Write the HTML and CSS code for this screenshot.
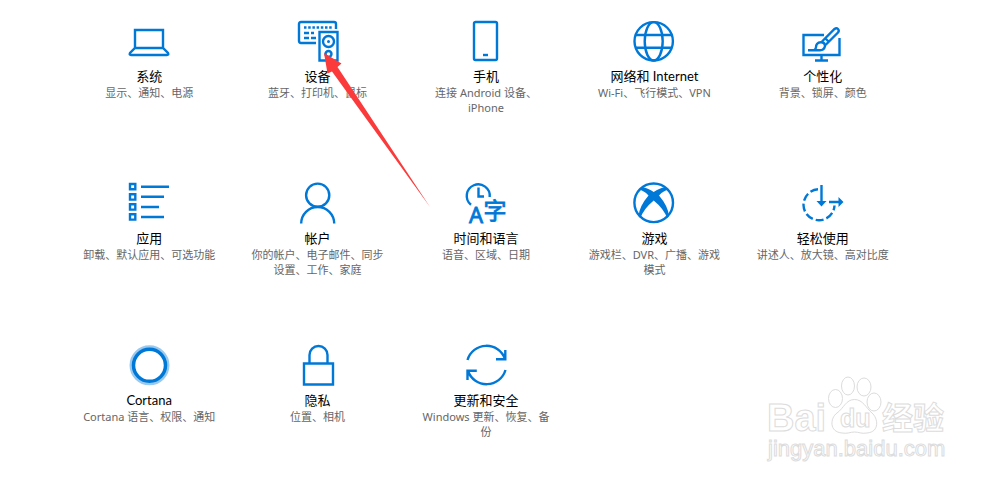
FILE: index.html
```
<!DOCTYPE html>
<html lang="zh-CN">
<head>
    <meta charset="UTF-8">
    <meta name="viewport" content="width=device-width, initial-scale=1.0">
    <title>Windows 设置</title>
    <link rel="stylesheet" href="styles.css">
</head>
<body>

    <main class="settings">
        <a class="tile" href="#system">
            <svg class="icon" viewBox="0 0 42 42" aria-hidden="true">
                <path d="M7 28V10h28v18M7 28h28l5 5q1 2-1 2H3q-2 0-1-2z"/>
            </svg>
            <span class="title">系统</span>
            <span class="desc">显示、通知、电源</span>
        </a>

        <a class="tile" href="#devices">
            <svg class="icon" viewBox="0 0 42 42" aria-hidden="true">
                <path d="M19 23H4q-2 0-2-2V4q0-2 2-2h33q2 0 2 2v5"/>
                <path d="M7 7.5h28" stroke-dasharray="2.5 1.7"/>
                <path d="M7 13h5M14 13h3M7 18h5M14 18h5"/>
                <path d="M22.5 12h18v28.5h-18z"/>
                <circle cx="31.5" cy="21.5" r="5.5"/>
                <circle cx="31.5" cy="21.5" r="1.5" class="solid"/>
                <circle cx="31.5" cy="34" r="3"/>
            </svg>
            <span class="title">设备</span>
            <span class="desc">蓝牙、打印机、鼠标</span>
            <!-- Red pointer -->
            <svg class="pointer" viewBox="0 0 106 154" aria-hidden="true">
                <path d="M0 0L17.5 10.5 13.5 14 106 154 8 18.5 3.5 20.5z"/>
            </svg>
        </a>

        <a class="tile" href="#phone">
            <svg class="icon" viewBox="0 0 42 42" aria-hidden="true">
                <rect x="9" y="2" width="23" height="38" rx="1.5"/>
                <path d="M18 35h5"/>
            </svg>
            <span class="title">手机</span>
            <span class="desc">连接 Android 设备、iPhone</span>
        </a>

        <a class="tile" href="#network">
            <svg class="icon" viewBox="0 0 42 42" aria-hidden="true">
                <circle cx="20.7" cy="21.3" r="19.2"/>
                <ellipse cx="20.7" cy="21.3" rx="9" ry="19.2"/>
                <path d="M3 15h35.5M3 27.7h35.5"/>
            </svg>
            <span class="title">网络和 Internet</span>
            <span class="desc">Wi-Fi、飞行模式、VPN</span>
        </a>

        <a class="tile" href="#personal">
            <svg class="icon" viewBox="0 0 42 42" aria-hidden="true">
                <path d="M22 15H1.500v20h36V18M19.500 35v5M13 40.500h13"/>
                <path d="M6 30.300h12q4 0 5-4c0-3-2-4-4-4-4 0-5 3-5 5q0 2-2 3"/>
                <path d="M20 21.500l12.500-12.500q2-1.500 3.500 0 1.500 1.500 0 3.500L23.500 25M23.500 18.500l3.500 3.500"/>
            </svg>
            <span class="title">个性化</span>
            <span class="desc">背景、锁屏、颜色</span>
        </a>

        <a class="tile" href="#apps">
            <svg class="icon" viewBox="0 0 42 42" aria-hidden="true">
                <path d="M2 2h5.300v5.300h-5.300zM2 12.300h5.300v5.300h-5.300zM2 22.300h5.300v5.300h-5.300zM2 32.300h5.300v5.300h-5.300z"/>
                <path d="M13 4.700h28M13 14.800h23M13 25h18M13 35h23"/>
            </svg>
            <span class="title">应用</span>
            <span class="desc">卸载、默认应用、可选功能</span>
        </a>

        <a class="tile" href="#accounts">
            <svg class="icon" viewBox="0 0 42 42" aria-hidden="true">
                <circle cx="20.700" cy="13.200" r="11.600"/>
                <path d="M4.200 41.500a16.500 16.500 0 0 1 33 0"/>
            </svg>
            <span class="title">帐户</span>
            <span class="desc">你的帐户、电子邮件、同步设置、工作、家庭</span>
        </a>

        <a class="tile" href="#time">
            <svg class="icon" viewBox="0 0 42 42" aria-hidden="true">
                <path d="M6 22.800A11.500 11.500 0 1 1 24.700 15M13.500 5.500V14.500H19"/>
                <text class="letter" x="11" y="41">A</text>
                <text class="hanzi" x="30" y="37">字</text>
            </svg>
            <span class="title">时间和语言</span>
            <span class="desc">语音、区域、日期</span>
        </a>

        <a class="tile" href="#gaming">
            <svg class="icon" viewBox="0 0 42 42" aria-hidden="true">
                <circle cx="20.700" cy="20.800" r="19.300"/>
                <path class="solid" d="M6 8Q8 5 10.500 5.500 15 6 20.700 10 26.500 6 31 5.500 33.500 5 35.500 8 31 8 26 13.500 35 24 36 34L34 36Q31 27 20.700 18.500 10.500 27 7.500 36L5.500 34Q6.500 24 15.500 13.500 10.500 8 6 8z"/>
            </svg>
            <span class="title">游戏</span>
            <span class="desc">游戏栏、DVR、广播、游戏模式</span>
        </a>

        <a class="tile" href="#ease">
            <svg class="icon" viewBox="0 0 42 42" aria-hidden="true">
                <path d="M16 7.300A15.500 15.500 0 1 0 32.500 23.500" stroke-dasharray="8 3"/>
                <path d="M19.500 3v18M27 20h12"/>
                <path class="solid" d="M14.500 19h10l-5 5.500zM36.500 15l5 5-5 5z"/>
            </svg>
            <span class="title">轻松使用</span>
            <span class="desc">讲述人、放大镜、高对比度</span>
        </a>

        <a class="tile" href="#cortana">
            <svg class="icon" viewBox="0 0 42 42" aria-hidden="true">
                <circle class="halo" cx="21.500" cy="21.300" r="18.500"/>
                <circle class="ring" cx="21.500" cy="21.300" r="16"/>
            </svg>
            <span class="title">Cortana</span>
            <span class="desc">Cortana 语言、权限、通知</span>
        </a>

        <a class="tile" href="#privacy">
            <svg class="icon" viewBox="0 0 42 42" aria-hidden="true">
                <path d="M7 19.500h29v21h-29zM12.500 19V11a9 9 0 0 1 18 0v8"/>
            </svg>
            <span class="title">隐私</span>
            <span class="desc">位置、相机</span>
        </a>

        <a class="tile" href="#update">
            <svg class="icon" viewBox="0 0 42 42" aria-hidden="true">
                <path d="M2.500 16A19.700 19.700 0 0 1 40 15M40.300 6v9.200h-9.300M40.500 26A19.700 19.700 0 0 1 3 27M2.500 36v-9.200h9.300"/>
            </svg>
            <span class="title">更新和安全</span>
            <span class="desc">Windows 更新、恢复、备份</span>
        </a>
    </main>

    <!-- Baidu watermark -->
    <svg class="watermark" viewBox="0 0 184 88" role="img" aria-label="Baidu 经验">
        <text class="brand" x="2" y="57">Bai</text>
        <ellipse cx="70.500" cy="24.500" rx="7" ry="9"/>
        <ellipse cx="83" cy="12" rx="6.500" ry="9"/>
        <ellipse cx="99" cy="13" rx="7" ry="9"/>
        <ellipse cx="109" cy="28" rx="7" ry="9"/>
        <path d="M89.500 25.500C98 25.500 101 34 107 39S115 58 102 59C96 60 94 58 89.500 58S83 60 77 59C64 58 65 44 72 39S81 25.500 89.500 25.500z"/>
        <text class="du" x="75" y="53">du</text>
        <text class="jingyan" x="117" y="55">经验</text>
        <text class="site" x="3" y="82">jingyan.baidu.com</text>
    </svg>

</body>
</html>
```
FILE: styles.css
```
body {
    font-family: "Noto Sans", "Noto Sans CJK SC", sans-serif;
    margin: 0;
    background-color: #fff;
    color: #000;
    min-height: 100vh;
    position: relative;
}
.settings {
    display: grid;
    grid-template-columns: repeat(5, 1fr);
    grid-auto-rows: minmax(96px, auto);
    row-gap: 66px;
    padding: 20px 93px 0 65px;
}
.tile {
    position: relative;
    display: flex;
    flex-direction: column;
    align-items: center;
    padding: 0 16px;
    color: #000;
    text-align: center;
    text-decoration: none;
}
.tile:hover .title {
    color: #0078d7;
}
.icon {
    width: 42px;
    height: 42px;
    overflow: visible;
    fill: none;
    stroke: #0078d7; /* Windows accent blue */
    stroke-width: 2.4;
}
.icon .solid {
    fill: #0078d7;
    stroke: none;
}
.icon .halo {
    stroke: #99c9ef;
    stroke-width: 3;
}
.icon .ring {
    stroke-width: 3.5;
}
.icon text {
    fill: #0078d7;
    stroke-width: 0.8;
    text-anchor: middle;
}
.icon .letter {
    font-size: 22px;
}
.icon .hanzi {
    font-size: 23px;
}
.title {
    margin-top: 5px;
    font-family: Lato, "Noto Sans CJK SC", sans-serif;
    font-size: 13px;
    line-height: 18px;
}
.desc {
    font-size: 11px;
    line-height: 15px;
    color: #666;
}
/* Pointer over the devices tile */
.pointer {
    position: absolute;
    top: 33px;
    left: calc(50% + 6px);
    width: 106px;
    height: 154px;
    fill: #fb3b3b;
    z-index: 1;
    pointer-events: none;
}
/* Watermark */
.watermark {
    position: absolute;
    right: 51px;
    bottom: 22px;
    width: 184px;
    height: 88px;
    overflow: visible;
    fill: #fff;
    stroke: #dcdcdc;
    stroke-width: 1;
    font-family: "Liberation Sans", "Noto Sans CJK SC", sans-serif;
    pointer-events: none;
}
.watermark .brand {
    font-size: 38px;
    font-weight: bold;
}
.watermark .du {
    font-size: 25px;
    font-weight: bold;
}
.watermark .jingyan {
    font-size: 31px;
    font-weight: bold;
}
.watermark .site {
    font-size: 22px;
}
```
